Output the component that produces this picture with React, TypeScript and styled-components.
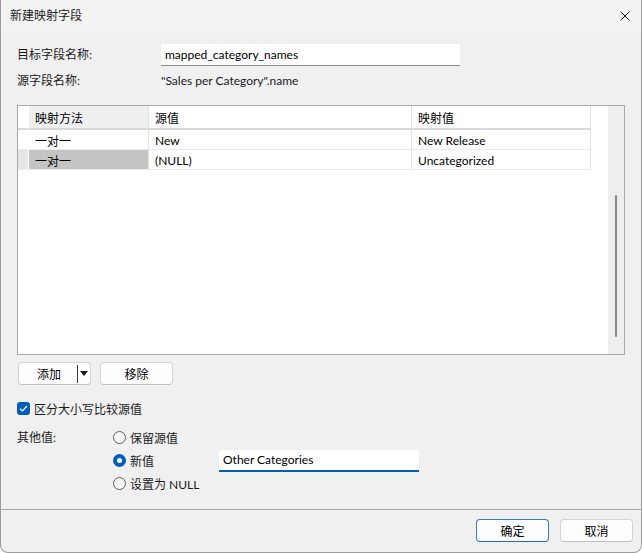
import React from 'react';
import styled, { createGlobalStyle, css } from 'styled-components';

const uiFont = `Lato, "Noto Sans CJK SC", sans-serif`;
const accent = '#005fb8';

const GlobalStyle = createGlobalStyle`
  html, body {
    margin: 0;
    padding: 0;
    background: #ffffff;
  }

  * {
    box-sizing: border-box;
  }

  body {
    font-family: ${uiFont};
    font-size: 12px;
    color: #1b1b1b;
  }
`;

const Window = styled.div`
  width: 642px;
  height: 553px;
  display: flex;
  flex-direction: column;
  background: #f0f0f0;
  border: 1px solid #9c9c9c;
  border-top: none;
  border-radius: 0 0 8px 8px;
  overflow: hidden;
`;

const TitleBar = styled.div`
  height: 31px;
  flex-shrink: 0;
  display: flex;
  align-items: center;
  justify-content: space-between;
  padding: 0 11px 0 9px;
  background: #f3f3f3;
`;

const TitleText = styled.span`
  font-size: 12px;
  line-height: 1;
`;

const CloseButton = styled.span`
  display: flex;
  align-items: center;
  color: #1b1b1b;
`;

const Content = styled.div`
  flex: 1;
  display: flex;
  flex-direction: column;
  padding: 13px 16px 0 16px;
`;

const FieldGrid = styled.div`
  display: grid;
  grid-template-columns: 144px 299px;
  grid-template-rows: 22px 20px;
  row-gap: 5px;
  align-items: center;
`;

const FieldLabel = styled.span`
  line-height: 20px;
`;

const TextInput = styled.input<{ $focused?: boolean }>`
  height: 22px;
  width: 100%;
  margin: 0;
  padding: 0 4px 1px 4px;
  font-family: ${uiFont};
  font-size: 12px;
  color: #000;
  background: #ffffff;
  border: none;
  outline: none;
  border-bottom: 1px solid #8a8a8a;
  border-radius: 2px 2px 0 0;

  ${(p) =>
    p.$focused &&
    css`
      border-bottom: 2px solid ${accent};
      padding-bottom: 0;
    `}
`;

const TableFrame = styled.div`
  margin-top: 14px;
  height: 250px;
  display: flex;
  border: 1px solid #a8a8a8;
  background: #ffffff;
`;

const GridArea = styled.div`
  flex: 1;
  display: grid;
  grid-template-columns: 11px 120px 263px 179px;
  grid-auto-rows: 20px;
  grid-template-rows: 24px;
  align-content: start;
`;

const Cell = styled.div<{ $header?: boolean; $bg?: string; $rowHead?: boolean }>`
  display: flex;
  align-items: center;
  padding-left: ${(p) => (p.$rowHead ? '0' : '6px')};
  padding-top: 1px;
  background: ${(p) => p.$bg || '#ffffff'};
  border-right: 1px solid ${(p) => (p.$rowHead ? '#ffffff' : '#e2e2e2')};
  border-bottom: ${(p) => (p.$header ? '2px solid #dadada' : '1px solid #ececec')};
  white-space: nowrap;
  overflow: hidden;
  color: #000;
`;

const ScrollTrack = styled.div`
  width: 16px;
  display: flex;
  justify-content: center;
  padding-top: 89px;
  background: #eeeeee;
`;

const ScrollThumb = styled.div`
  width: 2px;
  height: 142px;
  border-radius: 1px;
  background: #8a8a8a;
`;

const ButtonRow = styled.div`
  margin: 7px 0 0 1px;
  display: flex;
  gap: 9px;
`;

const Button = styled.button<{ $primary?: boolean }>`
  width: 73px;
  height: 23px;
  margin: 0;
  padding: 0;
  display: flex;
  align-items: center;
  justify-content: center;
  font-family: ${uiFont};
  font-size: 12px;
  color: #000;
  background: #fdfdfd;
  border: 1px solid ${(p) => (p.$primary ? '#2f7fcb' : '#d3d3d3')};
  border-bottom-color: ${(p) => (p.$primary ? '#1a6fc0' : '#c2c2c2')};
  border-radius: 4px;
`;

const SplitLabel = styled.span`
  flex: 1;
  text-align: center;
  padding-left: 2px;
`;

const SplitDivider = styled.span`
  width: 1px;
  height: 18px;
  background: #3a3a3a;
`;

const SplitCaret = styled.span`
  width: 12px;
  display: flex;
  justify-content: center;
  align-items: center;
`;

const CheckRow = styled.label`
  margin-top: 13px;
  height: 20px;
  display: flex;
  align-items: center;
  gap: 4px;
`;

const CheckBox = styled.span`
  width: 13px;
  height: 13px;
  border-radius: 3px;
  background: ${accent};
  display: flex;
  align-items: center;
  justify-content: center;
`;

const OtherGrid = styled.div`
  margin-top: 8px;
  display: grid;
  grid-template-columns: 96px 106px 200px;
  grid-template-rows: repeat(3, 23px);
  align-items: center;
`;

const RadioOption = styled.label`
  display: flex;
  align-items: center;
  gap: 4px;
`;

const RadioDot = styled.span<{ $checked?: boolean }>`
  width: 13px;
  height: 13px;
  border-radius: 50%;
  flex-shrink: 0;
  ${(p) =>
    p.$checked
      ? css`
          border: 4px solid ${accent};
          background: #ffffff;
        `
      : css`
          border: 1px solid #5f5f5f;
          background: #f6f6f6;
        `}
`;

const Footer = styled.div`
  height: 43px;
  flex-shrink: 0;
  display: flex;
  justify-content: flex-end;
  align-items: flex-start;
  gap: 11px;
  padding: 9px 8px 0 0;
  border-top: 1px solid #a9a9a9;
`;

const rows = [
  { method: '一对一', source: 'New', target: 'New Release', current: false },
  { method: '一对一', source: '(NULL)', target: 'Uncategorized', current: true },
];

function MappingTable() {
  return (
    <TableFrame>
      <GridArea>
        <Cell $header $rowHead />
        <Cell $header $bg="#efefef">映射方法</Cell>
        <Cell $header>源值</Cell>
        <Cell $header>映射值</Cell>
        {rows.map((r, i) => (
          <React.Fragment key={i}>
            <Cell $rowHead $bg={r.current ? '#e6e6e6' : '#ffffff'} />
            <Cell $bg={r.current ? '#c4c4c4' : '#ffffff'}>{r.method}</Cell>
            <Cell>{r.source}</Cell>
            <Cell>{r.target}</Cell>
          </React.Fragment>
        ))}
      </GridArea>
      <ScrollTrack>
        <ScrollThumb />
      </ScrollTrack>
    </TableFrame>
  );
}

export default function App() {
  return (
    <>
      <GlobalStyle />
      <Window>
        <TitleBar>
          <TitleText>新建映射字段</TitleText>
          <CloseButton>
            <svg width="10" height="10" viewBox="0 0 10 10">
              <path d="M0.5 0.5 L9.5 9.5 M9.5 0.5 L0.5 9.5" stroke="#1b1b1b" strokeWidth="1" />
            </svg>
          </CloseButton>
        </TitleBar>

        <Content>
          <FieldGrid>
            <FieldLabel>目标字段名称:</FieldLabel>
            <TextInput defaultValue="mapped_category_names" readOnly />
            <FieldLabel>源字段名称:</FieldLabel>
            <FieldLabel>"Sales per Category".name</FieldLabel>
          </FieldGrid>

          <MappingTable />

          <ButtonRow>
            <Button>
              <SplitLabel>添加</SplitLabel>
              <SplitDivider />
              <SplitCaret>
                <svg width="8" height="5" viewBox="0 0 8 5">
                  <path d="M0 0 H8 L4 5 Z" fill="#1b1b1b" />
                </svg>
              </SplitCaret>
            </Button>
            <Button>移除</Button>
          </ButtonRow>

          <CheckRow>
            <CheckBox>
              <svg width="9" height="7" viewBox="0 0 9 7">
                <path d="M1 3.6 L3.4 6 L8 1" fill="none" stroke="#ffffff" strokeWidth="1.2" />
              </svg>
            </CheckBox>
            区分大小写比较源值
          </CheckRow>

          <OtherGrid>
            <FieldLabel>其他值:</FieldLabel>
            <RadioOption>
              <RadioDot />
              保留源值
            </RadioOption>
            <span />
            <span />
            <RadioOption>
              <RadioDot $checked />
              新值
            </RadioOption>
            <TextInput defaultValue="Other Categories" readOnly $focused />
            <span />
            <RadioOption>
              <RadioDot />
              设置为 NULL
            </RadioOption>
            <span />
          </OtherGrid>
        </Content>

        <Footer>
          <Button $primary>确定</Button>
          <Button>取消</Button>
        </Footer>
      </Window>
    </>
  );
}
